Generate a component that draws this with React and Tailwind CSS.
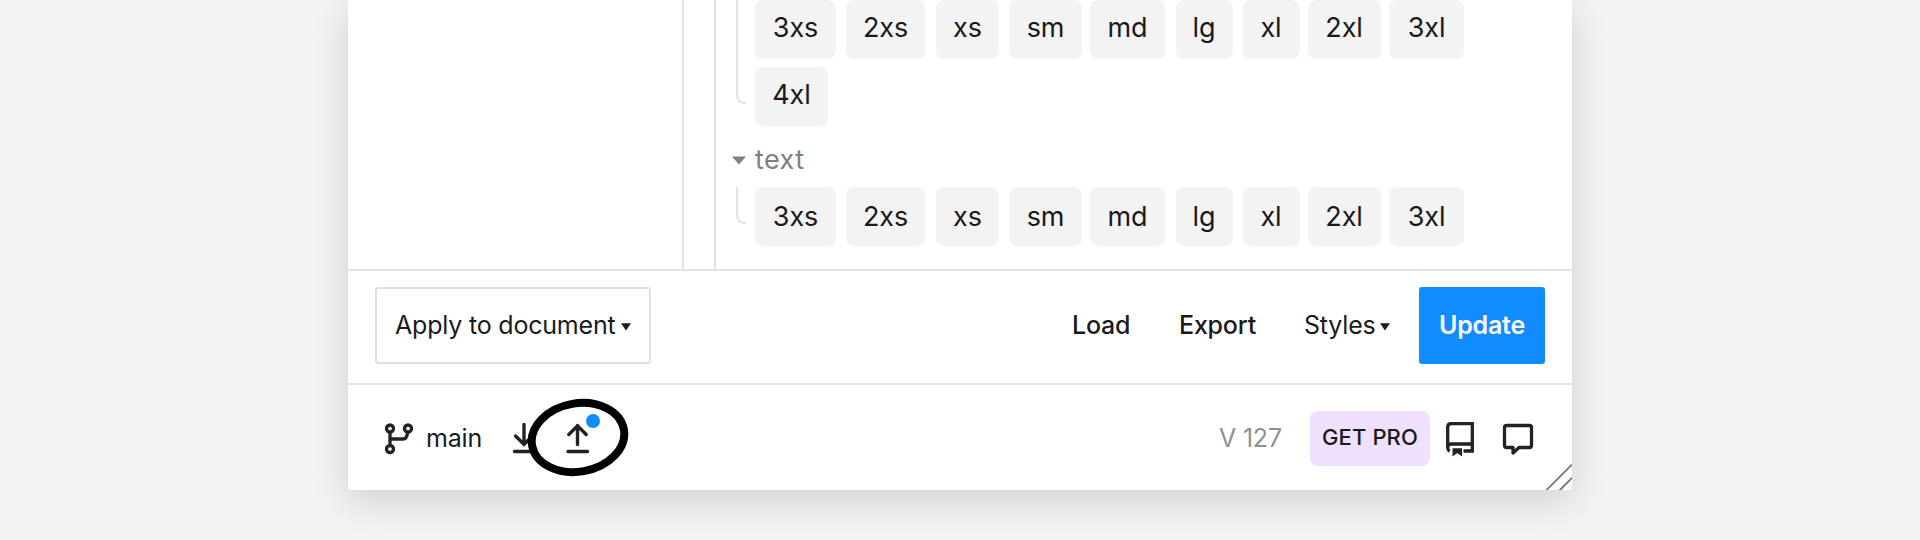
import React from "react";

const SIZES = [
  ["3xs", "w-[81px] mr-[10px]"],
  ["2xs", "w-[79px] mr-[11px]"],
  ["xs", "w-[63px] mr-[10px]"],
  ["sm", "w-[73px] mr-[8px]"],
  ["md", "w-[75px] mr-[10.5px]"],
  ["lg", "w-[57px] mr-[10px]"],
  ["xl", "w-[57px] mr-[8px]"],
  ["2xl", "w-[73px] mr-[8.5px]"],
  ["3xl", "w-[75px]"],
];

function Chip({ label, className }) {
  return (
    <span className={`flex h-[59px] shrink-0 items-center justify-center rounded-lg bg-[#f3f3f3] text-[27px] leading-none tracking-[-0.1px] text-[#1a1a1a] ${className}`}>
      {label}
    </span>
  );
}

function ChipRow({ className }) {
  return (
    <div className="flex">
      {SIZES.map(([label, cls]) => (
        <Chip key={label} label={label} className={`${cls} ${className}`} />
      ))}
    </div>
  );
}

function Caret({ className }) {
  return (
    <svg viewBox="0 0 10 8" className={`h-2 w-2.5 shrink-0 ${className}`}>
      <path d="M0 0.3h10L5 7.6z" fill="#1e1e1e" />
    </svg>
  );
}

function BranchIcon() {
  return (
    <svg viewBox="0 0 28 32" className="h-8 w-7" fill="none" stroke="#222" strokeWidth="3.3">
      <circle cx="5" cy="5.5" r="3.5" />
      <circle cx="23" cy="5.5" r="3.5" />
      <circle cx="5" cy="26" r="3.5" />
      <path d="M5 9v13.5M5 16h13q4 0 4.7-7" />
    </svg>
  );
}

function PullIcon() {
  return (
    <svg viewBox="0 0 24 32" className="h-8 w-6" fill="none" stroke="#222" strokeWidth="3.4" strokeLinecap="round">
      <path d="M12 1.500v19.500M3.600 13l8.400 8.400 8.400-8.400M2.500 28.500h19" />
    </svg>
  );
}

function PushIcon() {
  return (
    <svg viewBox="0 0 24 32" className="h-8 w-6" fill="none" stroke="#222" strokeWidth="3.4" strokeLinecap="round">
      <path d="M11.500 21.500V2.500M2.800 11.500l8.700-8.700 8.700 8.700M2 28.500h19.500" />
    </svg>
  );
}

function RepoIcon() {
  return (
    <svg viewBox="0 0 30 36" className="h-9 w-[30px]" fill="none" stroke="#222" strokeWidth="3.3">
      <path d="M4.500 30.500Q2.700 29 2.700 26V6.200Q2.700 2.700 6.200 2.700H27.300V30H18.500" />
      <path d="M2.700 26Q2.700 23 6.200 23H27.300" />
      <path d="M7.500 27.200h9.500v8.300l-4.700-3.500-4.800 3.500z" fill="#222" stroke="none" />
    </svg>
  );
}

function CommentIcon() {
  return (
    <svg viewBox="0 0 32 32" className="h-8 w-8" fill="none" stroke="#222" strokeWidth="3.3" strokeLinejoin="round">
      <path d="M4.500 2.500H27.500Q29.500 2.500 29.500 4.500V22.500Q29.500 24.500 27.500 24.500H17L11 30V24.500H4.500Q2.500 24.500 2.500 22.500V4.500Q2.500 2.500 4.500 2.500Z" />
    </svg>
  );
}

export default function App() {
  return (
    <div className="h-[540px] w-[1920px] overflow-hidden bg-[#f3f3f3] pl-[348px] font-['Inter',sans-serif] text-[#1a1a1a]">
      <div className="relative flex h-[490px] w-[1224px] flex-col rounded-b-[3px] bg-white shadow-[0_10px_36px_rgba(0,0,0,0.15)]">
        <div className="flex h-[269px]">
          <div className="w-[336px] border-r-2 border-[#e3e3e3]" />
          <div className="w-8 border-r-2 border-[#e0e0e0]" />
          <div className="flex-1 pl-[20px]">
            <div className="flex">
              <div className="mr-[9px] h-[104px] w-[10px] rounded-bl-[9px] border-b-2 border-l-2 border-[#e3e3e3]" />
              <div className="flex flex-col gap-2">
                <ChipRow className="pb-[4px]" />
                <Chip label="4xl" className="w-[73px] pb-[4px]" />
              </div>
            </div>
            <div className="-ml-[4px] flex h-[61px] items-center pt-[5px]">
              <svg viewBox="0 0 14 9" className="mt-[3px] mr-[9px] h-[9px] w-3.5">
                <path d="M0 .5h14L7 8.500z" fill="#808080" />
              </svg>
              <span className="text-[27px] leading-none tracking-[0.4px] text-[#808080]">text</span>
            </div>
            <div className="flex">
              <div className="mr-[9px] h-[37px] w-[10px] rounded-bl-[9px] border-b-2 border-l-2 border-[#e3e3e3]" />
              <ChipRow className="pb-px" />
            </div>
          </div>
        </div>

        <div className="flex h-[114px] items-start border-t-2 border-[#e3e3e3] pt-4 pr-[27px] pl-[27px] text-[25px] leading-none tracking-[-0.2px]">
          <button className="flex h-[77px] w-[276px] items-center rounded-[3px] border-2 border-[#dfdfdf] pl-[18px]">
            <span className="w-[226px] text-left whitespace-nowrap">Apply to document</span>
            <Caret className="mt-0.5" />
          </button>
          <div className="ml-auto flex h-[77px] items-center">
            <span className="w-[107px] font-medium">Load</span>
            <span className="w-[125px] font-medium">Export</span>
            <span className="w-[76px]">Styles</span>
            <Caret className="mt-0.5 mr-[29px]" />
            <button className="flex h-[77px] w-[126px] shrink-0 items-center justify-center rounded-[3px] bg-[#118cff] font-semibold text-white">Update</button>
          </div>
        </div>

        <div className="flex h-[107px] items-center border-t-2 border-[#e3e3e3] pt-[2px] pr-[38px] pl-[37px] text-[25px] leading-none tracking-[-0.2px]">
          <BranchIcon />
          <span className="ml-[13px] w-[86px]">main</span>
          <PullIcon />
          <div className="relative ml-[30px] h-8 w-6">
            <PushIcon />
            <span className="absolute top-[-9px] left-[20px] size-3.5 rounded-full bg-[#118cff]" />
          </div>
          <span className="ml-auto w-[91px] text-[#909090]">V 127</span>
          <span className="flex h-[55px] w-[120px] items-center justify-center rounded-lg bg-[#eee0ff] pb-[3px] text-[22px] font-medium tracking-[0.1px]">GET PRO</span>
          <div className="ml-[15px]"><RepoIcon /></div>
          <div className="ml-[27px]"><CommentIcon /></div>
        </div>

        <svg viewBox="0 0 102 80" className="absolute top-[398px] left-[179px] h-20 w-[102px]" fill="none">
          <ellipse cx="51" cy="39.500" rx="46.600" ry="34.200" transform="rotate(-10 51 39.500)" stroke="#000" strokeWidth="8" />
        </svg>
        <svg viewBox="0 0 26 26" className="absolute right-0 bottom-0 size-[26px]" stroke="#777" strokeWidth="1.800">
          <path d="M0 26.500L26.500 0M13.500 26.500L26.500 13.500" />
        </svg>
      </div>
    </div>
  );
}
